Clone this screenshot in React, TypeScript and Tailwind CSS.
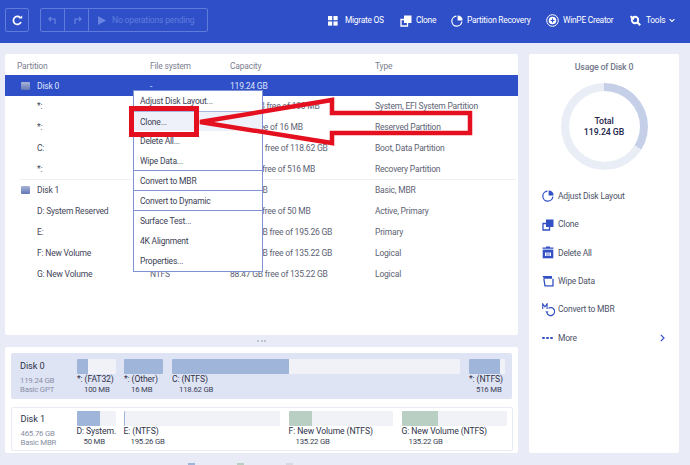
import React from "react";

function GridIcon() {
  return (
    <svg width="10" height="10" viewBox="0 0 11 11" fill="#fff">
      <rect x="0" y="0" width="4.6" height="4.6" />
      <rect x="6" y="0" width="4.6" height="4.6" />
      <rect x="0" y="6" width="4.6" height="4.6" />
      <rect x="6" y="6" width="4.6" height="4.6" />
    </svg>
  );
}
function CloneIcon({ color = "#fff", w = 12 }: { color?: string; w?: number }) {
  return (
    <svg width={w} height={w} viewBox="0 0 12 12">
      <path d="M1 4.5h6.5V11H1z" fill="none" stroke={color} strokeWidth="1.3" />
      <rect x="4" y="0.5" width="7.5" height="7.5" fill={color} />
    </svg>
  );
}
function PieIcon({ color = "#fff", w = 12 }: { color?: string; w?: number }) {
  return (
    <svg width={w} height={w} viewBox="0 0 12 12">
      <path d="M5.4 1.2a5 5 0 1 0 5.4 5.4" fill="none" stroke={color} strokeWidth="1.2" />
      <path d="M6.6 0.4a5 5 0 0 1 5 5h-5z" fill={color} />
    </svg>
  );
}
function PlusCircle() {
  return (
    <svg width="13" height="13" viewBox="0 0 13 13">
      <circle cx="6.5" cy="6.5" r="5.8" fill="none" stroke="#fff" strokeWidth="1" />
      <circle cx="6.5" cy="6.5" r="3.8" fill="#fff" />
      <path d="M6.5 4.5v4M4.5 6.5h4" stroke="#2f4fc9" strokeWidth="1.1" />
    </svg>
  );
}
function ToolsIcon() {
  return (
    <svg width="11" height="11" viewBox="0 0 11 11">
      <circle cx="5" cy="5" r="3.2" fill="none" stroke="#fff" strokeWidth="1.9" />
      <path d="M7 7l3.2 3.2" stroke="#fff" strokeWidth="2.2" />
      <path d="M0.5 1.2L4 4.2" stroke="#fff" strokeWidth="1.8" />
    </svg>
  );
}
function TrashIcon() {
  return (
    <svg width="12" height="13" viewBox="0 0 12 13">
      <path d="M0.5 2.2h11M4 1h4" stroke="#3350c4" strokeWidth="1.2" />
      <rect x="0.7" y="3.6" width="10.6" height="8.7" fill="#3350c4" />
      <path d="M3 6.5h6v3.5H3z" fill="#fff" />
      <path d="M5 6.5v3.5M7 6.5v3.5" stroke="#3350c4" strokeWidth="0.8" />
    </svg>
  );
}
function WipeIcon() {
  return (
    <svg width="12" height="12" viewBox="0 0 12 12">
      <path d="M0.5 1h9.5v2.8H2z" fill="#3350c4" />
      <path d="M1.8 3.5L3 10.8h8V3.8" fill="none" stroke="#3350c4" strokeWidth="1.3" />
    </svg>
  );
}
function MbrIcon() {
  return (
    <svg width="13" height="14" viewBox="0 0 13 14">
      <path d="M0.7 6V0.8l2.2 3 2.2-3V6" fill="none" stroke="#3350c4" strokeWidth="1.1" />
      <path d="M5 4.2a4 4 0 1 1-1.5 5" fill="none" stroke="#3350c4" strokeWidth="1.2" transform="translate(1.5 1)" />
      <path d="M3.3 8.2l1.7 2.6 1.5-2.2z" fill="#3350c4" />
    </svg>
  );
}
function DiskIcon() {
  return <div className="w-[9px] h-[8px] rounded-[1px] bg-gradient-to-b from-[#a9b5d8] to-[#6377b4]" />;
}

const rows: { name: string; fs: string; cap: string; type: string; disk?: boolean; sel?: boolean }[] = [
  { name: "Disk 0", fs: "-", cap: "119.24 GB", type: "", disk: true, sel: true },
  { name: "*:", fs: "FAT32", cap: "68.36 MB free of 100 MB", type: "System, EFI System Partition" },
  { name: "*:", fs: "Other", cap: "0 Byte free of 16 MB", type: "Reserved Partition" },
  { name: "C:", fs: "NTFS", cap: "76.21 GB free of 118.62 GB", type: "Boot, Data Partition" },
  { name: "*:", fs: "NTFS", cap: "86.1 MB free of 516 MB", type: "Recovery Partition" },
  { name: "Disk 1", fs: "-", cap: "465.76 GB", type: "Basic, MBR", disk: true },
  { name: "D: System Reserved", fs: "NTFS", cap: "17.6 MB free of 50 MB", type: "Active, Primary" },
  { name: "E:", fs: "NTFS", cap: "193.84 GB free of 195.26 GB", type: "Primary" },
  { name: "F: New Volume", fs: "NTFS", cap: "117.34 GB free of 135.22 GB", type: "Logical" },
  { name: "G: New Volume", fs: "NTFS", cap: "88.47 GB free of 135.22 GB", type: "Logical" },
];

function Part({
  w,
  ml,
  used,
  label,
  size,
  color = "bg-[#9fb5d9]",
  free = "bg-[#f0f2f8]",
}: {
  w: number;
  ml: number;
  used: number;
  label: string;
  size: string;
  color?: string;
  free?: string;
}) {
  return (
    <div style={{ width: w, marginLeft: ml }} className="shrink-0">
      <div className={`h-[15px] flex rounded-[1px] overflow-hidden ${free}`}>
        <div style={{ width: used }} className={color} />
      </div>
      <div className="text-[8.6px] tracking-[-0.1px] leading-[10px] whitespace-nowrap text-[#2d3147]">{label}</div>
      <div className="text-[7.8px] tracking-[-0.2px] leading-[9px] mt-[0.5px] whitespace-nowrap text-[#3b3f55] pl-[7px]">{size}</div>
    </div>
  );
}

const menu: { t: string; line?: boolean; hi?: boolean }[] = [
  { t: "Adjust Disk Layout..." },
  { t: "Clone...", hi: true },
  { t: "Delete All..." },
  { t: "Wipe Data...", line: true },
  { t: "Convert to MBR", line: true },
  { t: "Convert to Dynamic", line: true },
  { t: "Surface Test..." },
  { t: "4K Alignment" },
  { t: "Properties..." },
];

const actions: { icon: React.ReactNode; t: string }[] = [
  { icon: <PieIcon color="#3350c4" w={12} />, t: "Adjust Disk Layout" },
  { icon: <CloneIcon color="#3350c4" w={12} />, t: "Clone" },
  { icon: <TrashIcon />, t: "Delete All" },
  { icon: <WipeIcon />, t: "Wipe Data" },
  { icon: <MbrIcon />, t: "Convert to MBR" },
];

export default function App() {
  return (
    <div className="relative w-[690px] h-[465px] overflow-hidden bg-[#e9ebf6] font-['Roboto','Noto_Sans',sans-serif]">
      <header className="h-[43px] bg-[#2f4fc9] flex items-center pl-[5px] pb-[3px] text-white">
        <div className="w-[24px] h-[24px] shrink-0 border border-[#5f7cdd] rounded-[2px] flex items-center justify-center">
          <svg width="11" height="11" viewBox="0 0 11 11">
            <path d="M9 7.2A4 4 0 1 1 8.2 2.6" fill="none" stroke="#fff" strokeWidth="1.7" />
            <path d="M6.8 3.6h3.4V0.4z" fill="#fff" />
          </svg>
        </div>
        <div className="ml-[11px] w-[168px] shrink-0 h-[24px] border border-[#5f7cdd] rounded-[2px] flex items-center text-[#5f7cdd]">
          <div className="w-[24px] h-full border-r border-[#5f7cdd] flex items-center justify-center">
            <svg width="10" height="9" viewBox="0 0 10 9"><path d="M3 1L1 3l2 2M1 3h6v5" fill="none" stroke="#6884e0" strokeWidth="1.2" /></svg>
          </div>
          <div className="w-[24px] h-full border-r border-[#5f7cdd] flex items-center justify-center">
            <svg width="10" height="9" viewBox="0 0 10 9"><path d="M7 1l2 2-2 2M9 3H3v5" fill="none" stroke="#6884e0" strokeWidth="1.2" /></svg>
          </div>
          <svg className="ml-[9px]" width="8" height="9" viewBox="0 0 8 9"><path d="M0 0l8 4.5L0 9z" fill="#6884e0" /></svg>
          <span className="ml-[6px] text-[8.6px] tracking-[-0.2px] whitespace-nowrap">No operations pending</span>
        </div>
        <nav className="ml-[120px] pt-[1px] flex items-center text-[8.4px] tracking-[-0.25px] whitespace-nowrap">
          <GridIcon />
          <span className="ml-[7px] w-[39px]">Migrate OS</span>
          <span className="ml-[16px] flex"><CloneIcon /></span>
          <span className="ml-[4px] w-[20px]">Clone</span>
          <span className="ml-[15px] flex"><PieIcon /></span>
          <span className="ml-[4px] w-[64px]">Partition Recovery</span>
          <span className="ml-[15px] flex"><PlusCircle /></span>
          <span className="ml-[4px] w-[51px]">WinPE Creator</span>
          <span className="ml-[16px] flex"><ToolsIcon /></span>
          <span className="ml-[5px] w-[19px]">Tools</span>
          <svg className="ml-[4px]" width="6" height="5" viewBox="0 0 7 5"><path d="M0.7 0.8L3.5 3.6 6.3 0.8" fill="none" stroke="#fff" strokeWidth="1.3" /></svg>
        </nav>
      </header>

      <div className="flex pl-[5px] pt-[11px] gap-[11px]">
        <div className="w-[513px] shrink-0">
          <section className="h-[281px] bg-white rounded-[2px] text-[8.5px] tracking-[-0.2px] text-[#5d6274]">
            <div className="h-[21px] flex items-center text-[#7c8090] pt-[4px]">
              <span className="w-[145px] pl-[12px]">Partition</span>
              <span className="w-[80px]">File system</span>
              <span className="w-[145px]">Capacity</span>
              <span>Type</span>
            </div>
            {rows.map((r, i) => (
              <React.Fragment key={i}>
                {i === 5 && <div className="h-px -mb-px ml-[15px] mr-[2px] bg-[#eef0f6]" />}
                <div className={`h-[20.9px] pt-[1px] flex items-center whitespace-nowrap ${r.sel ? "bg-[#2f4fc9] text-[#dfe5fa]" : ""}`}>
                  <span className="w-[145px] flex items-center pl-[16px]">
                    <span className="w-[16px] flex">{r.disk && <DiskIcon />}</span>
                    <span className={r.sel ? "" : "text-[#3f4458]"}>{r.name}</span>
                  </span>
                  <span className="w-[80px]">{r.fs}</span>
                  <span className="w-[145px]">{r.cap}</span>
                  <span>{r.type}</span>
                </div>
              </React.Fragment>
            ))}
          </section>

          <div className="h-[12px] flex items-center justify-center gap-[1.5px]">
            <i className="w-[2px] h-[2px] rounded-full bg-[#aeb4c8]" />
            <i className="w-[2px] h-[2px] rounded-full bg-[#aeb4c8]" />
            <i className="w-[2px] h-[2px] rounded-full bg-[#aeb4c8]" />
          </div>

          <section className="h-[106px] bg-white rounded-[2px] px-[6px] pt-[6px]">
            <div className="h-[46px] bg-[#dfe4f5] rounded-[2px] flex pt-[6px]">
              <div className="w-[60px] shrink-0 pl-[9px]">
                <div className="text-[9.2px] tracking-[-0.1px] leading-[13px] text-[#2d3147]">Disk 0</div>
                <div className="text-[7.8px] tracking-[-0.2px] leading-[9px] mt-[4px] text-[#8a8fa5]">119.24 GB</div>
                <div className="text-[7.8px] tracking-[-0.2px] leading-[9px] text-[#8a8fa5]">Basic GPT</div>
              </div>
              <Part w={39} ml={6} used={11} label="*: (FAT32)" size="100 MB" />
              <Part w={39} ml={8} used={39} label="*: (Other)" size="16 MB" />
              <Part w={288} ml={9} used={117} label="C: (NTFS)" size="118.62 GB" />
              <Part w={36} ml={9} used={31} label="*: (NTFS)" size="516 MB" />
            </div>
            <div className="h-[44px] mt-[8px] border border-[#e9ebf4] rounded-[2px] flex pt-[3px] -mx-[0.5px]">
              <div className="w-[60px] shrink-0 pl-[9px] pt-[1px]">
                <div className="text-[9.2px] tracking-[-0.1px] leading-[13px] text-[#2d3147]">Disk 1</div>
                <div className="text-[7.8px] tracking-[-0.2px] leading-[9px] mt-[4px] text-[#8a8fa5]">465.76 GB</div>
                <div className="text-[7.8px] tracking-[-0.2px] leading-[9px] text-[#8a8fa5]">Basic MBR</div>
              </div>
              <Part w={39} ml={5} used={23} label="D: System." size="50 MB" />
              <Part w={156} ml={8} used={1} label="E: (NTFS)" size="195.26 GB" />
              <Part w={104} ml={9} used={23} label="F: New Volume (NTFS)" size="135.22 GB" color="bg-[#b9cfc3]" />
              <Part w={105} ml={9} used={36} label="G: New Volume (NTFS)" size="135.22 GB" color="bg-[#b9cfc3]" />
            </div>
          </section>

          <div className="flex gap-[42px] pl-[183px] mt-[10px]">
            <i className="w-[7px] h-[7px] bg-[#9fb5d9]" />
            <i className="w-[7px] h-[7px] bg-[#b9cfc3]" />
            <i className="w-[7px] h-[7px] bg-[#d8d8e2]" />
          </div>
        </div>

        <aside className="w-[150px] h-[399px] bg-white rounded-[2px] flex flex-col items-center">
          <div className="mt-[6px] text-[8.8px] tracking-[-0.2px] font-medium text-[#73788c] leading-[14px]">Usage of Disk 0</div>
          <div className="mt-[9px] w-[87px] h-[87px] rounded-full bg-[conic-gradient(#c5d0e8_0deg_122deg,#e9edf5_122deg_360deg)] flex items-center justify-center">
            <div className="w-[71px] h-[71px] rounded-full bg-white flex flex-col items-center justify-center text-[8.8px] tracking-[-0.1px] font-medium leading-[11px] text-[#23264a]">
              <span>Total</span>
              <span>119.24 GB</span>
            </div>
          </div>
          <div className="w-full mt-[12px] pl-[13px] pr-[13px] text-[8.5px] tracking-[-0.2px] text-[#4d5268]">
            {actions.map((a) => (
              <div key={a.t} className="h-[28.4px] flex items-center">
                <span className="w-[16px] flex">{a.icon}</span>
                <span>{a.t}</span>
              </div>
            ))}
            <div className="h-[28.4px] flex items-center">
              <span className="w-[16px] flex gap-[1.5px]">
                <i className="w-[2.5px] h-[2.5px] rounded-full bg-[#3350c4]" />
                <i className="w-[2.5px] h-[2.5px] rounded-full bg-[#3350c4]" />
                <i className="w-[2.5px] h-[2.5px] rounded-full bg-[#3350c4]" />
              </span>
              <span>More</span>
              <svg className="ml-auto mr-[1px]" width="5" height="8" viewBox="0 0 5 8"><path d="M0.8 0.8L4 4 0.8 7.2" fill="none" stroke="#3350c4" strokeWidth="1.2" /></svg>
            </div>
          </div>
        </aside>
      </div>

      {/* context menu */}
      <div className="absolute left-[133px] top-[90px] w-[130px] h-[182px] bg-white border border-[#7f93d4] text-[8.5px] tracking-[-0.2px] text-[#3d4156]">
        {menu.map((m) => (
          <div
            key={m.t}
            className={`h-[20px] pt-[1px] flex items-center pl-[6px] whitespace-nowrap ${m.hi ? "bg-[#eef1f9] border-t border-[#a8b5e2]" : ""} ${m.line ? "border-b border-[#7f93d4]" : ""}`}
          >
            {m.t}
          </div>
        ))}
      </div>

      {/* red annotation */}
      <svg className="absolute left-0 top-0 pointer-events-none" width="690" height="465" viewBox="0 0 690 465">
        <rect x="131.5" y="108.5" width="65" height="26" fill="none" stroke="#e5101f" strokeWidth="5" />
        <path d="M200 122L332 100V113H470V133H332V143Z" fill="none" stroke="#e5101f" strokeWidth="4.5" />
      </svg>
    </div>
  );
}
